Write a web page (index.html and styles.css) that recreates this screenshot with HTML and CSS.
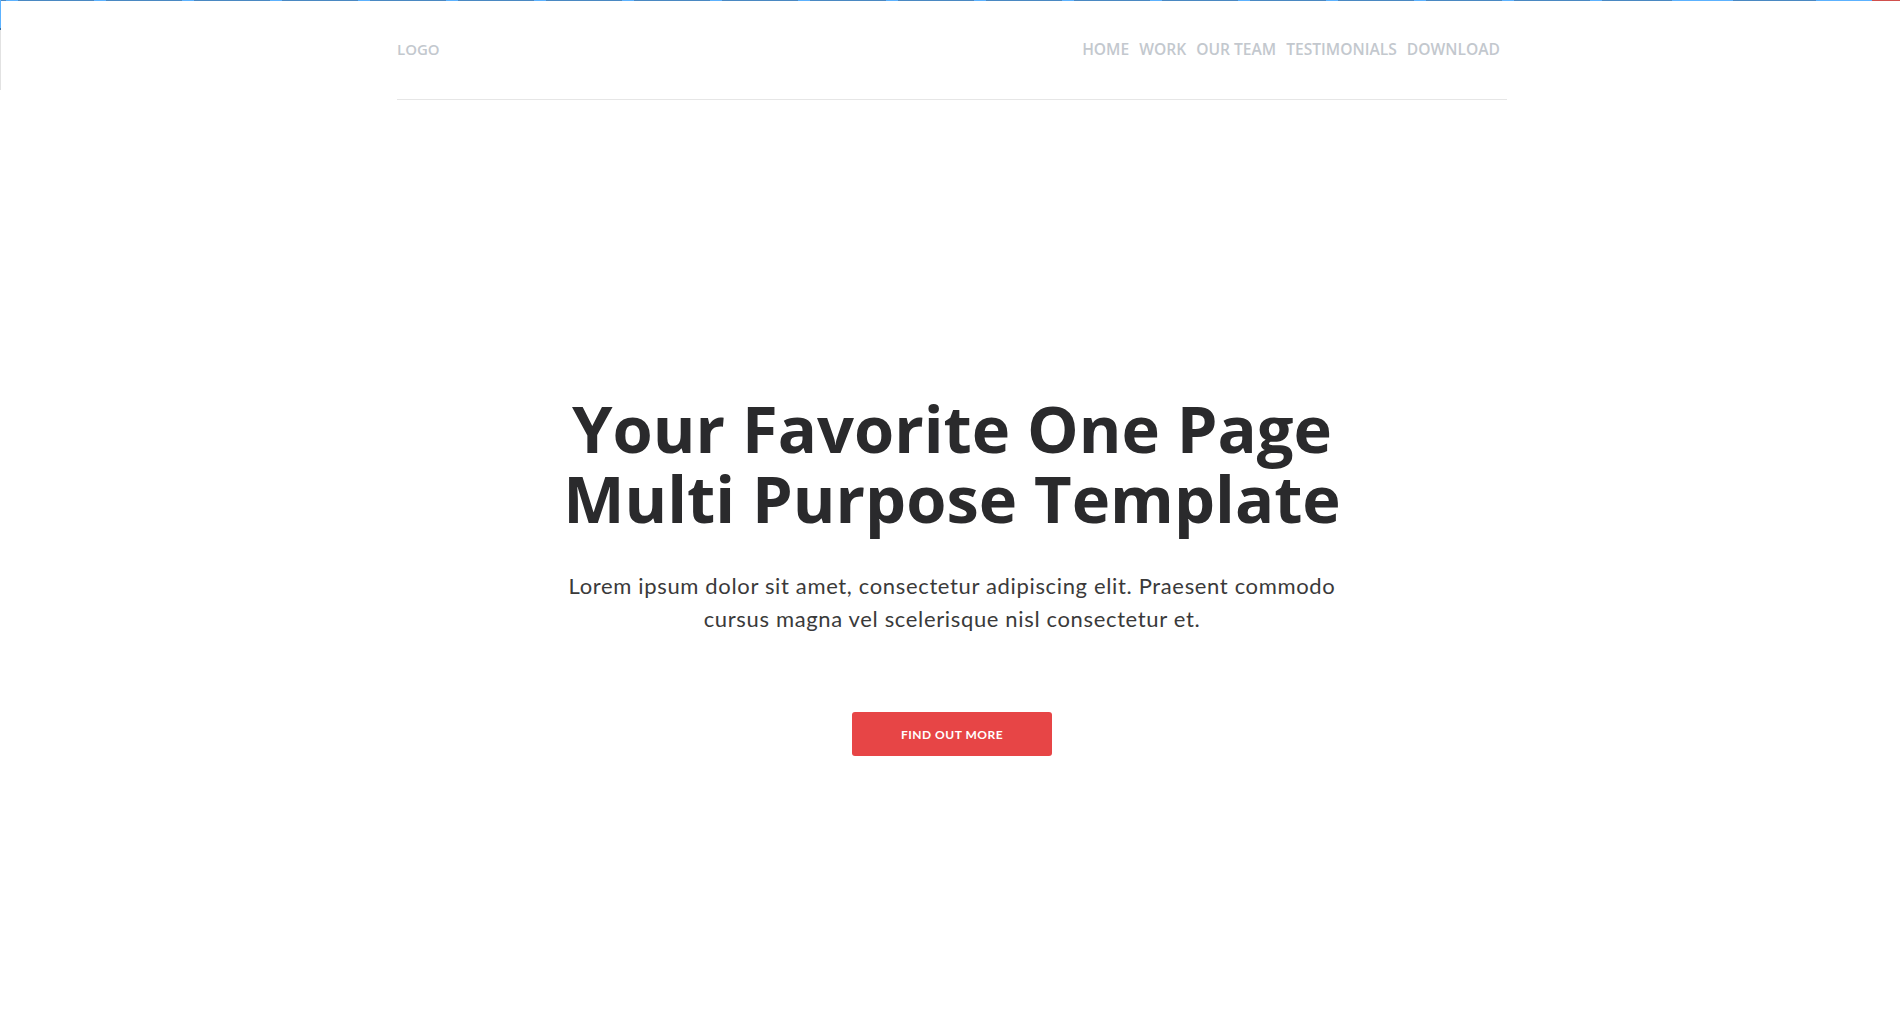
FILE: index.html
```html
<!DOCTYPE html>
<html lang="en">
<head>
<meta charset="utf-8">
<title>One Page Template</title>
<link rel="stylesheet" href="styles.css">
</head>
<body>
<div class="topline"></div>
<div class="edge"></div>
<header class="container header">
  <a class="logo" href="#">LOGO</a>
  <nav class="nav">
    <a href="#">HOME</a>
    <a href="#">WORK</a>
    <a href="#">OUR TEAM</a>
    <a href="#">TESTIMONIALS</a>
    <a href="#">DOWNLOAD</a>
  </nav>
</header>
<main class="hero">
  <h1 class="title">Your Favorite One Page<br>Multi Purpose Template</h1>
  <p class="lead">Lorem ipsum dolor sit amet, consectetur adipiscing elit. Praesent commodo<br>cursus magna vel scelerisque nisl consectetur et.</p>
  <a class="btn" href="#">FIND OUT MORE</a>
</main>
</body>
</html>
```

FILE: styles.css
```css
html, body {
  margin: 0;
  padding: 0;
  background: #fff;
}
body {
  font-family: "Open Sans", "Liberation Sans", sans-serif;
  color: #333;
}
a { text-decoration: none; }

.topline {
  height: 1px;
  background:
    linear-gradient(to right, transparent 0, transparent 1672px, #5cb2ff 1672px, #5cb2ff 1733px, #4a88c2 1733px, #4a88c2 1816px, #5cb2ff 1816px, #5cb2ff 1872px, #d0504d 1872px),
    repeating-linear-gradient(to right, #4a88c2 0, #4a88c2 6px, #5cb2ff 6px, #5cb2ff 18px, #4a88c2 18px, #4a88c2 88px);
}
.edge {
  position: absolute;
  left: 0;
  top: 0;
  width: 1px;
  height: 90px;
  background: linear-gradient(to bottom, #5cb2ff 0, #5cb2ff 28px, #3a6fa0 28px, #3a6fa0 30px, #e2e2e2 30px);
}

.container {
  width: 1110px;
  margin: 0 auto;
  position: relative;
  left: 2px;
}
.header {
  display: flex;
  justify-content: space-between;
  align-items: center;
  height: 99px;
  border-bottom: 1px solid #e6e6e6;
  box-sizing: border-box;
  padding: 0 7px 2px 0;
}
.logo, .nav a {
  font-family: "Open Sans", sans-serif;
  font-weight: 600;
  font-size: 15.6px;
  color: #c3c8ce;
  line-height: 20px;
}
.logo {
  font-size: 15px;
}
.nav {
  display: flex;
  gap: 10px;
}

.hero {
  display: flex;
  flex-direction: column;
  align-items: center;
  text-align: center;
  padding-top: 293px;
  padding-left: 4px;
}
.title {
  margin: 0;
  font-family: "Open Sans", sans-serif;
  font-weight: 700;
  font-size: 65px;
  line-height: 70px;
  color: #2a2a2c;
}
.lead {
  margin: 36px 0 0;
  font-family: "Lato", "Open Sans", sans-serif;
  font-weight: 400;
  font-size: 22px;
  line-height: 33px;
  letter-spacing: 0.65px;
  color: #3a3a3a;
}
.btn {
  margin-top: 77px;
  width: 200px;
  height: 44px;
  display: flex;
  align-items: center;
  justify-content: center;
  background: #e74546;
  border-radius: 3px;
  color: #fff;
  font-family: "Lato", sans-serif;
  font-weight: 700;
  font-size: 12px;
  letter-spacing: 0.5px;
}
```
